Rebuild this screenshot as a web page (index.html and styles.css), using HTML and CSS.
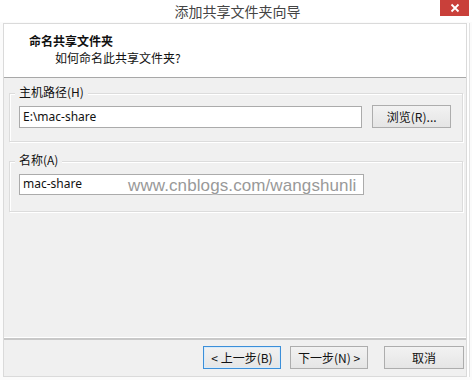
FILE: index.html
```html
<!DOCTYPE html>
<html>
<head>
<meta charset="utf-8">
<link rel="stylesheet" href="styles.css">
</head>
<body>
<div class="window">
  <div class="titlebar">
    <div></div>
    <div class="title">添加共享文件夹向导</div>
    <div class="close"><svg width="10" height="10" viewBox="0 0 10 10"><path d="M1.5 1.5 L8.5 8.5 M8.5 1.5 L1.5 8.5" stroke="#fff" stroke-width="1.8"/></svg></div>
  </div>
  <div class="client">
    <div class="header">
      <div class="h-title">命名共享文件夹</div>
      <div class="h-sub">如何命名此共享文件夹?</div>
    </div>
    <div class="body">
      <div class="group">
        <div class="legend">主机路径(H)</div>
        <div class="row">
          <div class="input">E:\mac-share</div>
          <div class="btn browse">浏览(R)...</div>
        </div>
      </div>
      <div class="group g2">
        <div class="legend">名称(A)</div>
        <div class="row">
          <div class="input">mac-share</div>
        </div>
      </div>
      <div class="watermark">www.cnblogs.com/wangshunli</div>
    </div>
    <div class="footer">
      <div class="btn nav focus">&lt; 上一步(B)</div>
      <div class="btn nav">下一步(N) &gt;</div>
      <div class="btn nav cancel">取消</div>
    </div>
  </div>
</div>
</body>
</html>
```
FILE: styles.css
```css
* { box-sizing: border-box; }
html, body { margin: 0; padding: 0; }
body {
  width: 472px;
  height: 380px;
  overflow: hidden;
  background: #fbfbfb;
  font-family: "Noto Sans", "Noto Sans CJK SC", sans-serif;
  font-size: 12px;
  color: #111;
}
.window {
  width: 472px;
  height: 380px;
  display: flex;
  flex-direction: column;
}
.titlebar {
  height: 22px;
  flex: none;
  display: grid;
  grid-template-columns: 1fr auto 1fr;
  background: #fff;
}
.title {
  font-family: "Noto Sans CJK SC", sans-serif;
  font-size: 14px;
  color: #444;
  line-height: 22px;
  padding-left: 3px;
}
.close {
  justify-self: end;
  align-self: start;
  width: 29px;
  height: 16px;
  margin-right: 3px;
  background: #c9403a;
  display: flex;
  align-items: center;
  justify-content: center;
}
.client {
  flex: 1;
  margin: 1px 5px 3px 3px;
  border: 1px solid #dadada;
  display: flex;
  flex-direction: column;
  background: #f0f0f0;
  box-shadow: 2px 0 0 #fff, 3px 0 0 #e2e2e2;
}
.header {
  height: 54px;
  flex: none;
  background: #fff;
  border-bottom: 1px solid #a8a8a8;
  padding: 8px 0 0 25px;
  font-family: "Noto Sans CJK SC", sans-serif;
  line-height: 17px;
}
.h-title { font-weight: bold; font-size: 12px; }
.h-sub { padding-left: 26px; font-size: 12px; }
.body {
  position: relative;
  flex: 1;
  padding: 7px 3px 0 5px;
  border-bottom: 1px solid #fff;
}
.group {
  position: relative;
  border: 1px solid #dcdcdc;
  box-shadow: 1px 1px 0 #fff, inset 1px 1px 0 #fff;
  margin-top: 8px;
  padding: 11px 11px 11px 9px;
  height: 49px;
}
.g2 { margin-top: 19px; height: 51px; }
.legend {
  position: absolute;
  left: 5px;
  top: -10px;
  padding: 0 4px;
  background: #f0f0f0;
  font-family: "Noto Sans CJK SC", sans-serif;
  line-height: 16px;
}
.row {
  display: flex;
  align-items: center;
  gap: 10px;
  margin-top: 1px;
}
.input {
  width: 345px;
  height: 22px;
  background: #fff;
  border: 1px solid #ababab;
  padding: 0 0 0 3px;
  line-height: 19px;
  font-size: 12px;
}
.g2 .input { height: 21px; line-height: 18px; }
.btn {
  height: 23px;
  border: 1px solid #adadad;
  background: linear-gradient(#f2f2f2, #e5e5e5);
  display: flex;
  align-items: center;
  justify-content: center;
  font-family: "Noto Sans CJK SC", sans-serif;
  font-size: 12px;
}
.browse { width: 79px; margin-top: -1px; }
.watermark {
  position: absolute;
  left: 124px;
  top: 98px;
  font-family: "Liberation Sans", sans-serif;
  font-size: 17px;
  color: #999;
  text-shadow: 0 0 2px #fff, 0 0 1px #fff;
  letter-spacing: 0.1px;
}
.footer {
  flex: none;
  height: 38px;
  border-top: 2px solid #c8c8c8;
  display: flex;
  align-items: flex-start;
  padding: 6px 0 0 199px;
  gap: 9px;
}
.nav { width: 78px; }
.focus { border-color: #3c8fd9; box-shadow: inset 0 0 0 1px #d8ebfa; }
.cancel { margin-left: 7px; width: 80px; }
```
